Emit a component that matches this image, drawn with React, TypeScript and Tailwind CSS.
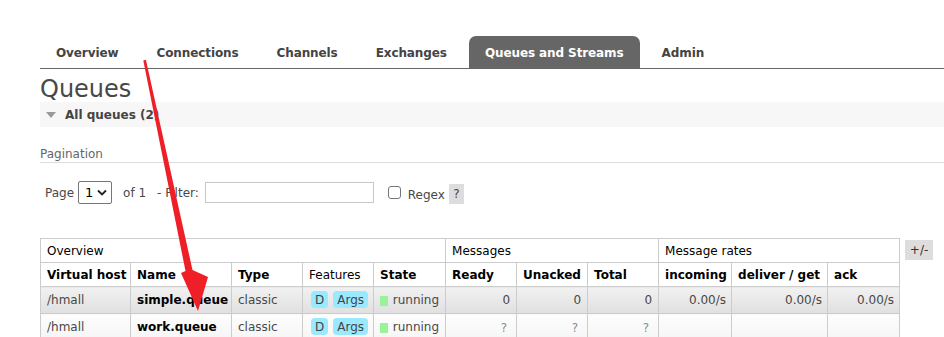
import React from 'react';

const tabs = ['Overview', 'Connections', 'Channels', 'Exchanges', 'Queues and Streams', 'Admin'];

const queues = [
  { vhost: '/hmall', name: 'simple.queue', ready: '0', unacked: '0', total: '0', rates: ['0.00/s', '0.00/s', '0.00/s'], alt: true },
  { vhost: '/hmall', name: 'work.queue', ready: '?', unacked: '?', total: '?', rates: ['', '', ''], alt: false },
];

function Badge({ children }: { children: React.ReactNode }) {
  return (
    <span className="inline-block h-[17px] rounded-[4px] bg-[#99e9ff] px-[4px] leading-[19px] text-[#444]">
      {children}
    </span>
  );
}

export default function App() {
  const th = 'border border-[#ccc] px-[6px] text-left font-bold text-black h-[24px] whitespace-nowrap';
  const grp = 'border border-[#ccc] px-[6px] text-left font-normal text-black h-[24px] whitespace-nowrap';

  return (
    <div
      className="relative h-[337px] w-full overflow-hidden bg-white text-[12px] text-[#484848]"
      style={{ fontFamily: '"DejaVu Sans", Verdana, sans-serif' }}
    >
      <div className="pl-10">
        {/* tabs */}
        <div className="flex gap-[6px] border-b border-[#666] pt-[36px]">
          {tabs.map((t) => (
            <div
              key={t}
              className={`flex h-[32px] items-center rounded-t-[7px] px-4 pt-[2px] font-bold tracking-[-0.1px] ${
                t === 'Queues and Streams' ? 'bg-[#666] text-white' : 'text-[#444]'
              }`}
            >
              {t}
            </div>
          ))}
        </div>

        <h1 className="mt-[7px] text-[24px] leading-[26px] text-[#484848]">Queues</h1>

        <div className="flex h-[25px] items-center bg-[#f7f7f7] pl-[6px]">
          <span className="mr-[9px] h-0 w-0 border-x-[5px] border-t-[6px] border-x-transparent border-t-[#999]" />
          <span className="font-bold text-[#444]">All queues (2)</span>
        </div>

        <div className="mt-[19px] h-[17px] border-b border-[#ddd] leading-[16px] text-[#666]">Pagination</div>

        <div className="mt-[18px] flex items-center pl-[5px]">
          <span>Page</span>
          <div className="ml-[4px] flex h-[23px] w-[34px] items-center justify-between rounded-[2px] border border-[#767676] pl-[6px] pr-[4px] text-[13px] text-black">
            <span>1</span>
            <svg width="10" height="7" viewBox="0 0 10 7">
              <path d="M1 1.5 L5 5.5 L9 1.5" fill="none" stroke="#222" strokeWidth="1.8" />
            </svg>
          </div>
          <span className="ml-[11px]">of 1</span>
          <span className="ml-[11px]">- Filter:</span>
          <div className="ml-[6px] h-[21px] w-[169px] border border-[#c8c8c8]" />
          <span className="ml-[14px] h-[13px] w-[13px] rounded-[3px] border border-[#767676]" />
          <span className="ml-[7px] mt-[5px]">Regex</span>
          <span className="ml-[4px] mt-[3px] flex h-[20px] w-[15px] items-center justify-center bg-[#ddd] text-[#444]">?</span>
        </div>

        <div className="mt-[34px] flex items-start">
          <table className="w-[859px] table-fixed border-collapse">
            <colgroup>
              <col className="w-[90px]" />
              <col className="w-[101px]" />
              <col className="w-[71px]" />
              <col className="w-[71px]" />
              <col className="w-[72px]" />
              <col className="w-[71px]" />
              <col className="w-[71px]" />
              <col className="w-[71px]" />
              <col className="w-[73px]" />
              <col className="w-[96px]" />
              <col className="w-[72px]" />
            </colgroup>
            <thead>
              <tr>
                <th colSpan={5} className={grp}>Overview</th>
                <th colSpan={3} className={grp}>Messages</th>
                <th colSpan={3} className={grp}>Message rates</th>
              </tr>
              <tr>
                <th className={`${th} pr-0`}>Virtual host</th>
                <th className={th}>Name</th>
                <th className={th}>Type</th>
                <th className={grp}>Features</th>
                <th className={th}>State</th>
                <th className={th}>Ready</th>
                <th className={`${th} pr-0`}>Unacked</th>
                <th className={th}>Total</th>
                <th className={`${th} pr-0`}>incoming</th>
                <th className={`${th} pr-0`}>deliver / get</th>
                <th className={th}>ack</th>
              </tr>
            </thead>
            <tbody>
              {queues.map((q) => {
                const bg = q.alt
                  ? 'bg-linear-to-b from-[#f1f1f1] to-[#e0e0e0]'
                  : 'bg-linear-to-b from-[#fdfdfd] to-[#f5f5f5]';
                const td = `border border-[#ccc] h-[27px] px-[6px] align-top pt-[4px] whitespace-nowrap ${bg}`;
                const num = q.ready === '?' ? 'text-right text-[12px] text-[#8b8b98] pr-[9px] pt-[5px]' : 'text-right';
                return (
                  <tr key={q.name}>
                    <td className={td}>{q.vhost}</td>
                    <td className={`${td} pr-0 font-bold text-black`}>{q.name}</td>
                    <td className={td}>classic</td>
                    <td className={`${td} pl-[8px] pt-[3px]`}>
                      <div className="flex gap-[5px]">
                        <Badge>D</Badge>
                        <Badge>Args</Badge>
                      </div>
                    </td>
                    <td className={td}>
                      <div className="flex items-center">
                        <span className="mr-[5px] mt-[1px] h-[10px] w-[10px] bg-[#99f399]" />
                        <span>running</span>
                      </div>
                    </td>
                    <td className={`${td} ${num}`}>{q.ready}</td>
                    <td className={`${td} ${num}`}>{q.unacked}</td>
                    <td className={`${td} ${num}`}>{q.total}</td>
                    {q.rates.map((r, i) => (
                      <td key={i} className={`${td} text-right pr-[5px]`}>{r}</td>
                    ))}
                  </tr>
                );
              })}
            </tbody>
          </table>
          <span className="ml-[5px] mt-[2px] flex h-[20px] w-[28px] items-center justify-center bg-[#ddd] text-[#333]">+/-</span>
        </div>
      </div>

      {/* annotation arrow */}
      <svg className="pointer-events-none absolute left-0 top-0" width="944" height="337" viewBox="0 0 944 337">
        <polygon
          points="143.3,60.4 145.9,59.8 192.5,270 208,277 198,311 181,273 185.5,271"
          fill="#ee1f26"
        />
      </svg>
    </div>
  );
}
